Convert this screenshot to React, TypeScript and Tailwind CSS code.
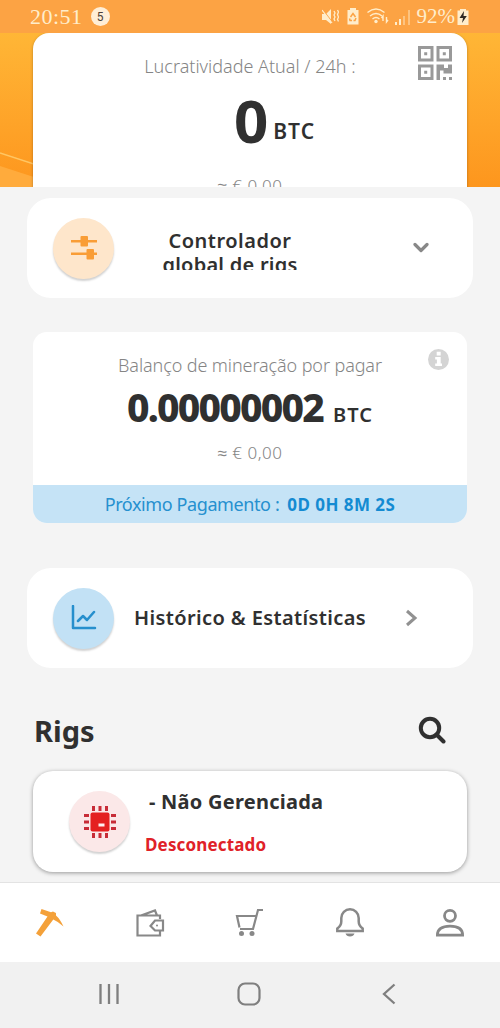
import type { ReactNode } from "react";

function StatusBar() {
  return (
    <div className="flex h-[33px] shrink-0 items-center bg-[#fca344] pl-[30px] pr-[31px] text-[#ffedcb]">
      <span className="font-['Liberation_Serif',serif] text-[22px] leading-[33px] tracking-[0.5px]">20:51</span>
      <span className="ml-2 flex size-[19px] items-center justify-center rounded-full bg-[#ffeed6] font-['Roboto',sans-serif] text-[12px] leading-none text-[#4b4138]">5</span>
      <svg className="ml-auto" width="17" height="18" viewBox="0 0 17 18" fill="currentColor">
        <path d="M0 6h4l5-5v15l-5-4H0z" />
        <path d="M1 2l10 13" stroke="#fca344" strokeWidth="1.2" />
        <path d="M0 2l10 13" stroke="currentColor" strokeWidth="1.2" />
        <path d="M12 3l1 2-1 2 1 2-1 2 1 2M15.500 2l1 2-1 2.500 1 2.500-1 2.500 1 2" fill="none" stroke="currentColor" strokeWidth="1.300" />
      </svg>
      <svg className="ml-[8px]" width="12" height="17" viewBox="0 0 12 17">
        <path fill="currentColor" d="M3 2V0h6v2h2.500v14.500H.5V2z" />
        <path d="M3.500 9L6 5.500 8.500 9M9 10l-1 2.500H6.500M5 12.500H3l-.5-2" fill="none" stroke="#fca344" strokeWidth="1.500" />
      </svg>
      <svg className="ml-[8px]" width="22" height="17" viewBox="0 0 22 17" fill="none" stroke="currentColor" strokeWidth="1.400">
        <path d="M.5 4.500q8.500-7 17 0M3 8q6-5 12 0M5.500 11q3.500-3 7 0" />
        <circle cx="9" cy="13.500" r="1.700" fill="currentColor" stroke="none" />
        <path d="M16 13V8l-1.500 2M19.500 9v5l1.500-2" />
      </svg>
      <svg className="ml-[6px]" width="16" height="16" viewBox="0 0 16 16" fill="currentColor">
        <path d="M0 13h2v3H0zM4 10h2v6H4z" />
        <path opacity=".45" d="M8 7h2v9H8zM13 1h2v15h-2z" />
      </svg>
      <span className="ml-[6px] font-['Liberation_Serif',serif] text-[21px] leading-[33px]">92%</span>
      <svg className="ml-[2px]" width="12" height="16" viewBox="0 0 12 16">
        <path fill="currentColor" d="M3 1.500V0h6v1.500h2.500V16H.5V1.500z" />
        <path d="M7 2L2.500 9H6l-1 5 4.800-7H6.500z" fill="#302a25" />
      </svg>
    </div>
  );
}

function QrIcon() {
  return (
    <svg className="absolute right-[15px] top-[13px]" width="34" height="34" viewBox="0 0 34 34" fill="#999">
      <path fillRule="evenodd" d="M0 0h15.500v15.500H0zM3 3v9.500h9.500V3zM18.500 0H34v15.500H18.500zM21.500 3v9.500H31V3zM0 18.500h15.500V34H0zM3 21.500V31h9.500v-9.500z" />
      <path d="M6.200 6.200h3v3h-3zM24.800 6.200h3v3h-3zM6.200 24.800h3v3h-3zM18.500 18.500h7.500v3.500h4v-3.500h4V27.500h-8.500v-3H22V34h-3.500zM25 31h3v3h-3zM31 31h3v3h-3z" />
    </svg>
  );
}

function Disc({ className, children }: { className: string; children: ReactNode }) {
  return (
    <div className={`flex size-[61px] shrink-0 items-center justify-center rounded-full shadow-[0_2px_2px_rgba(0,0,0,0.18)] ${className}`}>
      {children}
    </div>
  );
}

function Profitability() {
  return (
    <header className="relative flex h-[154px] shrink-0 justify-center overflow-hidden bg-gradient-to-b from-[#ffb636] to-[#fd961d]">
      <svg className="absolute left-0 top-0" width="40" height="154" viewBox="0 0 40 154">
        <path d="M0 133L40 146V154H0z" fill="#ffab3c" />
        <path d="M0 120L40 133" stroke="#ffc663" strokeWidth="1.500" />
      </svg>
      <section className="relative flex h-[190px] w-[434px] flex-col items-center rounded-[16px] bg-white shadow-[0_1px_3px_rgba(0,0,0,0.3)]">
        <QrIcon />
        <p className="mt-[20px] h-[26px] whitespace-nowrap text-[18px] font-light leading-[26px] text-[#858585]">Lucratividade Atual / 24h :</p>
        <div className="mt-[6px] flex h-[70px] items-baseline gap-[5px] pl-[49px] font-bold">
          <span className="text-[60px] leading-[70px]">0</span>
          <span className="-translate-y-[4px] text-[21px] font-semibold tracking-[1px]">BTC</span>
        </div>
        <p className="mt-[18px] h-[26px] whitespace-nowrap text-[17px] font-light leading-[26px] tracking-[0.5px] text-[#858585]">≈ € 0,00</p>
      </section>
    </header>
  );
}

function Controller() {
  return (
    <section className="flex h-[100px] w-[446px] shrink-0 items-center rounded-[24px] bg-white pl-[26px]">
      <Disc className="bg-[#fee6cb]">
        <svg width="28" height="26" viewBox="0 0 28 26" fill="#f99d36">
          <path d="M1 5h26v2.500H1zM1 17.500h26V20H1z" />
          <rect x="10.500" y="1" width="7.500" height="10.500" rx="1" />
          <rect x="16.500" y="14" width="7.500" height="10.500" rx="1" />
        </svg>
      </Disc>
      <div className="ml-[36px] mt-[2px] h-[41px] w-[160px] overflow-hidden text-center text-[20px] font-semibold leading-[24px]">
        <p className="whitespace-nowrap tracking-[0.500px]">Controlador</p>
        <p className="whitespace-nowrap tracking-[0.250px]">global de rigs</p>
      </div>
      <svg className="ml-[103px]" width="16" height="12" viewBox="0 0 16 12" fill="none" stroke="#888" strokeWidth="3.200" strokeLinecap="round" strokeLinejoin="round">
        <path d="M2 2.500l6 6 6-6" />
      </svg>
    </section>
  );
}

function Balance() {
  return (
    <section className="relative mt-[34px] flex h-[191px] w-[434px] shrink-0 flex-col items-center overflow-hidden rounded-[14px] bg-white">
      <svg className="absolute right-[18px] top-[17px]" width="21" height="21" viewBox="0 0 21 21">
        <circle cx="10.500" cy="10.500" r="10.500" fill="#d4d4d4" />
        <path fill="#fff" d="M8.700 2.800h4v3.600h-4zM7.200 8h5.500v6.500H14V17H7.200v-2.500h1.700v-4H7.200z" />
      </svg>
      <p className="mt-[20px] h-[26px] whitespace-nowrap text-[18px] font-light leading-[26px] tracking-[-0.100px] text-[#858585]">Balanço de mineração por pagar</p>
      <div className="mt-[4px] flex h-[50px] items-baseline gap-[10px]">
        <span className="text-[39px] font-extrabold leading-[50px] tracking-[-1.800px]">0.00000002</span>
        <span className="text-[20px] font-semibold tracking-[1px]">BTC</span>
      </div>
      <p className="mt-[8px] h-[26px] whitespace-nowrap text-[17px] font-light leading-[26px] tracking-[0.5px] text-[#858585]">≈ € 0,00</p>
      <div className="mt-auto flex h-[38px] w-full items-center justify-center whitespace-nowrap bg-[#c5e3f6] text-[18px] text-[#2690cf]">
        <span className="tracking-[-0.400px]">Próximo Pagamento :</span>
        <span className="ml-[8px] mt-px text-[17px] font-bold tracking-[0.450px] text-[#148bd2]">0D 0H 8M 2S</span>
      </div>
    </section>
  );
}

function History() {
  return (
    <section className="mt-[45px] flex h-[100px] w-[446px] shrink-0 items-center rounded-[24px] bg-white pl-[26px]">
      <Disc className="bg-[#c2e1f5]">
        <svg width="26" height="26" viewBox="0 0 26 26" fill="none" stroke="#268fcd" strokeWidth="2.500" strokeLinecap="round" strokeLinejoin="round">
          <path d="M2 1v22h22M7 16l5-5 4 4 7-8" />
        </svg>
      </Disc>
      <h2 className="ml-[20px] w-[231px] whitespace-nowrap text-[20px] font-semibold tracking-[0.380px]">Histórico &amp; Estatísticas</h2>
      <svg className="ml-[40px]" width="14" height="18" viewBox="0 0 14 18" fill="none" stroke="#919191" strokeWidth="3">
        <path d="M2 2l8 7-8 7" />
      </svg>
    </section>
  );
}

function Rigs() {
  return (
    <>
      <div className="mt-[42px] flex h-[42px] w-[434px] shrink-0 items-center justify-between">
        <h1 className="ml-px text-[29px] font-bold leading-[42px]">Rigs</h1>
        <svg className="mr-[21px] -mt-[3px]" width="28" height="28" viewBox="0 0 28 28" fill="none" stroke="#303030" strokeWidth="4">
          <circle cx="12" cy="12" r="9.200" />
          <path d="M18.500 18.500l7 7" strokeLinecap="round" />
        </svg>
      </div>
      <section className="mt-[19px] flex h-[101px] w-[434px] shrink-0 rounded-[20px] bg-white pl-[36px] pt-[20px] shadow-[0_1px_4px_rgba(0,0,0,0.38)]">
        <Disc className="bg-[#fbe8e8]">
          <svg width="32" height="32" viewBox="0 0 32 32">
            <path d="M9.500 0v32M16 0v32M22.500 0v32M0 9.500h32M0 16h32M0 22.500h32" stroke="#c72c37" strokeWidth="3" />
            <rect x="5" y="5" width="22" height="22" fill="#fbe8e8" />
            <rect x="6.500" y="6.500" width="19" height="19" rx="2" fill="#e42020" />
            <path fill="#fff0f0" d="M14.500 17.500h6v3h-6z" />
          </svg>
        </Disc>
        <div className="ml-[15px] whitespace-nowrap font-bold">
          <h2 className="-mt-[3px] pl-[4px] text-[20px] leading-[28px] tracking-[0.250px]">- Não Gerenciada</h2>
          <p className="mt-[16px] text-[17px] leading-[26px] tracking-[0.150px] text-[#e02128]">Desconectado</p>
        </div>
      </section>
    </>
  );
}

function TabBar() {
  return (
    <nav className="grid h-[80px] shrink-0 grid-cols-5 place-items-center border-t border-[#e3e3e3] bg-white text-[#888]">
      <svg width="30" height="30" viewBox="0 0 30 30" fill="#f4a13a">
        <path d="M6.500 1L16 4.200l2-.7 3 1.500 0 2.500Q25 11 28.500 18.500 23 13.500 18.300 11.500L5.500 28.500 1 25.500 12.500 8.500 5 5.500z" />
      </svg>
      <svg width="30" height="30" viewBox="0 0 30 30" fill="none" stroke="currentColor" strokeWidth="2.200">
        <path d="M25 11V7.500H2.500V27.500H25v-4M6 7.500l14-5 2 5M28 12.500h-8L15.500 18l4.500 4.500h8z" />
        <circle cx="22" cy="17.500" r="1" fill="currentColor" stroke="none" />
      </svg>
      <svg width="30" height="30" viewBox="0 0 30 30" fill="none" stroke="currentColor" strokeWidth="2.200">
        <path d="M28 2h-5l-5 19H5M21 8H2l2.500 11.500" />
        <circle cx="6.500" cy="25.500" r="2.500" fill="currentColor" stroke="none" />
        <circle cx="17" cy="25.500" r="2.500" fill="currentColor" stroke="none" />
      </svg>
      <svg width="30" height="30" viewBox="0 0 30 30" fill="none" stroke="currentColor" strokeWidth="2.500">
        <path d="M2.300 23v-2.500q4-3 4-7V10a8.700 8.700 0 0 1 17.400 0v3.500q0 4 4 7V23z" />
        <path d="M10.500 25.500h9q-1 3-4.500 3t-4.500-3z" fill="currentColor" stroke="none" />
      </svg>
      <svg width="30" height="30" viewBox="0 0 30 30" fill="none" stroke="currentColor" strokeWidth="2.800">
        <circle cx="15" cy="7.800" r="5.500" />
        <path d="M2.400 27.200q0-9 12.600-9t12.600 9z" />
      </svg>
    </nav>
  );
}

function SystemBar() {
  return (
    <div className="flex h-[66px] shrink-0 items-center bg-[#f1f1f1] pb-[2px] pl-[98px] text-[#7f7f7f]">
      <svg width="22" height="22" viewBox="0 0 22 22" stroke="currentColor" strokeWidth="2.300">
        <path d="M2.500 1v20M11 1v20M19.500 1v20" />
      </svg>
      <svg className="ml-[117px]" width="24" height="24" viewBox="0 0 24 24" fill="none" stroke="currentColor" strokeWidth="2.200">
        <rect x="1.500" y="1.500" width="21" height="21" rx="6.500" />
      </svg>
      <svg className="ml-[121px]" width="14" height="22" viewBox="0 0 14 22" fill="none" stroke="currentColor" strokeWidth="2.300">
        <path d="M12.500 1.500L2 11l10.500 9.500" />
      </svg>
    </div>
  );
}

export default function App() {
  return (
    <div className="flex h-[1028px] w-[500px] flex-col overflow-hidden bg-[#f4f4f4] font-['Noto_Sans',sans-serif] text-[#303030]">
      <StatusBar />
      <Profitability />
      <main className="flex h-[695px] shrink-0 flex-col items-center pt-[11px]">
        <Controller />
        <Balance />
        <History />
        <Rigs />
      </main>
      <TabBar />
      <SystemBar />
    </div>
  );
}
